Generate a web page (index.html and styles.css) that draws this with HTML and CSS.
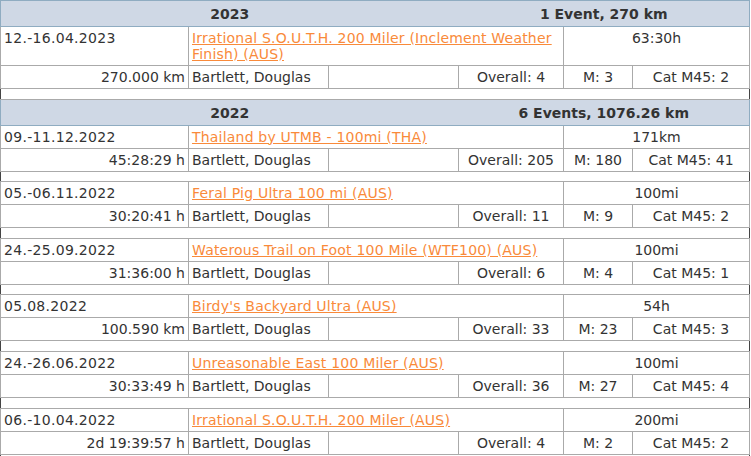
FILE: index.html
```html
<!DOCTYPE html>
<html>
<head>
<meta charset="utf-8">
<link rel="stylesheet" href="styles.css">
</head>
<body>
<table class="results">
<colgroup>
<col class="c1"><col class="c2"><col class="c3"><col class="c4"><col class="c5"><col class="c6">
</colgroup>
<tbody>
<tr class="year"><td colspan="3" class="yl">2023</td><td colspan="3" class="yr">1 Event, 270 km</td></tr>
<tr class="ev1"><td class="date">12.-16.04.2023</td><td colspan="3" class="event"><a href="#">Irrational S.O.U.T.H. 200 Miler (Inclement Weather Finish) (AUS)</a></td><td colspan="2" class="center">63:30h</td></tr>
<tr class="ev2"><td class="perf">270.000 km</td><td class="name">Bartlett, Douglas</td><td></td><td class="center">Overall: 4</td><td class="center">M: 3</td><td class="center">Cat M45: 2</td></tr>
<tr class="gap"><td colspan="6"></td></tr>

<tr class="year"><td colspan="3" class="yl">2022</td><td colspan="3" class="yr">6 Events, 1076.26 km</td></tr>
<tr class="ev1"><td class="date">09.-11.12.2022</td><td colspan="3" class="event"><a href="#">Thailand by UTMB - 100mi (THA)</a></td><td colspan="2" class="center">171km</td></tr>
<tr class="ev2"><td class="perf">45:28:29 h</td><td class="name">Bartlett, Douglas</td><td></td><td class="center">Overall: 205</td><td class="center">M: 180</td><td class="center">Cat M45: 41</td></tr>
<tr class="gap"><td colspan="6"></td></tr>

<tr class="ev1"><td class="date">05.-06.11.2022</td><td colspan="3" class="event"><a href="#">Feral Pig Ultra 100 mi (AUS)</a></td><td colspan="2" class="center">100mi</td></tr>
<tr class="ev2"><td class="perf">30:20:41 h</td><td class="name">Bartlett, Douglas</td><td></td><td class="center">Overall: 11</td><td class="center">M: 9</td><td class="center">Cat M45: 2</td></tr>
<tr class="gap"><td colspan="6"></td></tr>

<tr class="ev1"><td class="date">24.-25.09.2022</td><td colspan="3" class="event"><a href="#">Waterous Trail on Foot 100 Mile (WTF100) (AUS)</a></td><td colspan="2" class="center">100mi</td></tr>
<tr class="ev2"><td class="perf">31:36:00 h</td><td class="name">Bartlett, Douglas</td><td></td><td class="center">Overall: 6</td><td class="center">M: 4</td><td class="center">Cat M45: 1</td></tr>
<tr class="gap"><td colspan="6"></td></tr>

<tr class="ev1"><td class="date">05.08.2022</td><td colspan="3" class="event"><a href="#">Birdy's Backyard Ultra (AUS)</a></td><td colspan="2" class="center">54h</td></tr>
<tr class="ev2"><td class="perf">100.590 km</td><td class="name">Bartlett, Douglas</td><td></td><td class="center">Overall: 33</td><td class="center">M: 23</td><td class="center">Cat M45: 3</td></tr>
<tr class="gap"><td colspan="6"></td></tr>

<tr class="ev1"><td class="date">24.-26.06.2022</td><td colspan="3" class="event"><a href="#">Unreasonable East 100 Miler (AUS)</a></td><td colspan="2" class="center">100mi</td></tr>
<tr class="ev2"><td class="perf">30:33:49 h</td><td class="name">Bartlett, Douglas</td><td></td><td class="center">Overall: 36</td><td class="center">M: 27</td><td class="center">Cat M45: 4</td></tr>
<tr class="gap"><td colspan="6"></td></tr>

<tr class="ev1"><td class="date">06.-10.04.2022</td><td colspan="3" class="event"><a href="#">Irrational S.O.U.T.H. 200 Miler (AUS)</a></td><td colspan="2" class="center">200mi</td></tr>
<tr class="ev2"><td class="perf">2d 19:39:57 h</td><td class="name">Bartlett, Douglas</td><td></td><td class="center">Overall: 4</td><td class="center">M: 2</td><td class="center">Cat M45: 2</td></tr>
<tr class="gap"><td colspan="6"></td></tr>
</tbody>
</table>
</body>
</html>
```

FILE: styles.css
```css
html, body {
  margin: 0;
  padding: 0;
  background: #ffffff;
}

body {
  font-family: "DejaVu Sans", Verdana, sans-serif;
  font-size: 14px;
  line-height: 16px;
  color: #333333;
}

.results {
  width: 749px;
  table-layout: fixed;
  border-collapse: collapse;
}

.c1 { width: 188px; }
.c2 { width: 140px; }
.c3 { width: 130px; }
.c4 { width: 105px; }
.c5 { width: 69px; }
.c6 { width: 117px; }

.results td {
  border: 1px solid #aaaaaa;
  padding: 3px 3px;
  vertical-align: top;
}

.results .year td {
  background: #cfd8e5;
  border-top: 1px solid #8facc1;
  border-bottom: 1px solid #8facc1;
  font-weight: bold;
  text-align: center;
  padding: 5px 3px 4px;
}

.results .year .yl {
  border-left: 1px solid #8facc1;
  border-right: 0 none;
}

.results .year .yr {
  border-left: 0 none;
  border-right: 1px solid #8facc1;
}

.date {
  text-align: left;
  letter-spacing: 0.3px;
}

.perf {
  text-align: right;
}

.center {
  text-align: center;
}

.event a {
  color: #f98a3a;
  text-decoration: underline;
  letter-spacing: 0.2px;
}

.results .gap td {
  height: 9.6px;
  padding: 0;
  border-left: 1px solid #444444;
  border-right: 1px solid #444444;
}
```
